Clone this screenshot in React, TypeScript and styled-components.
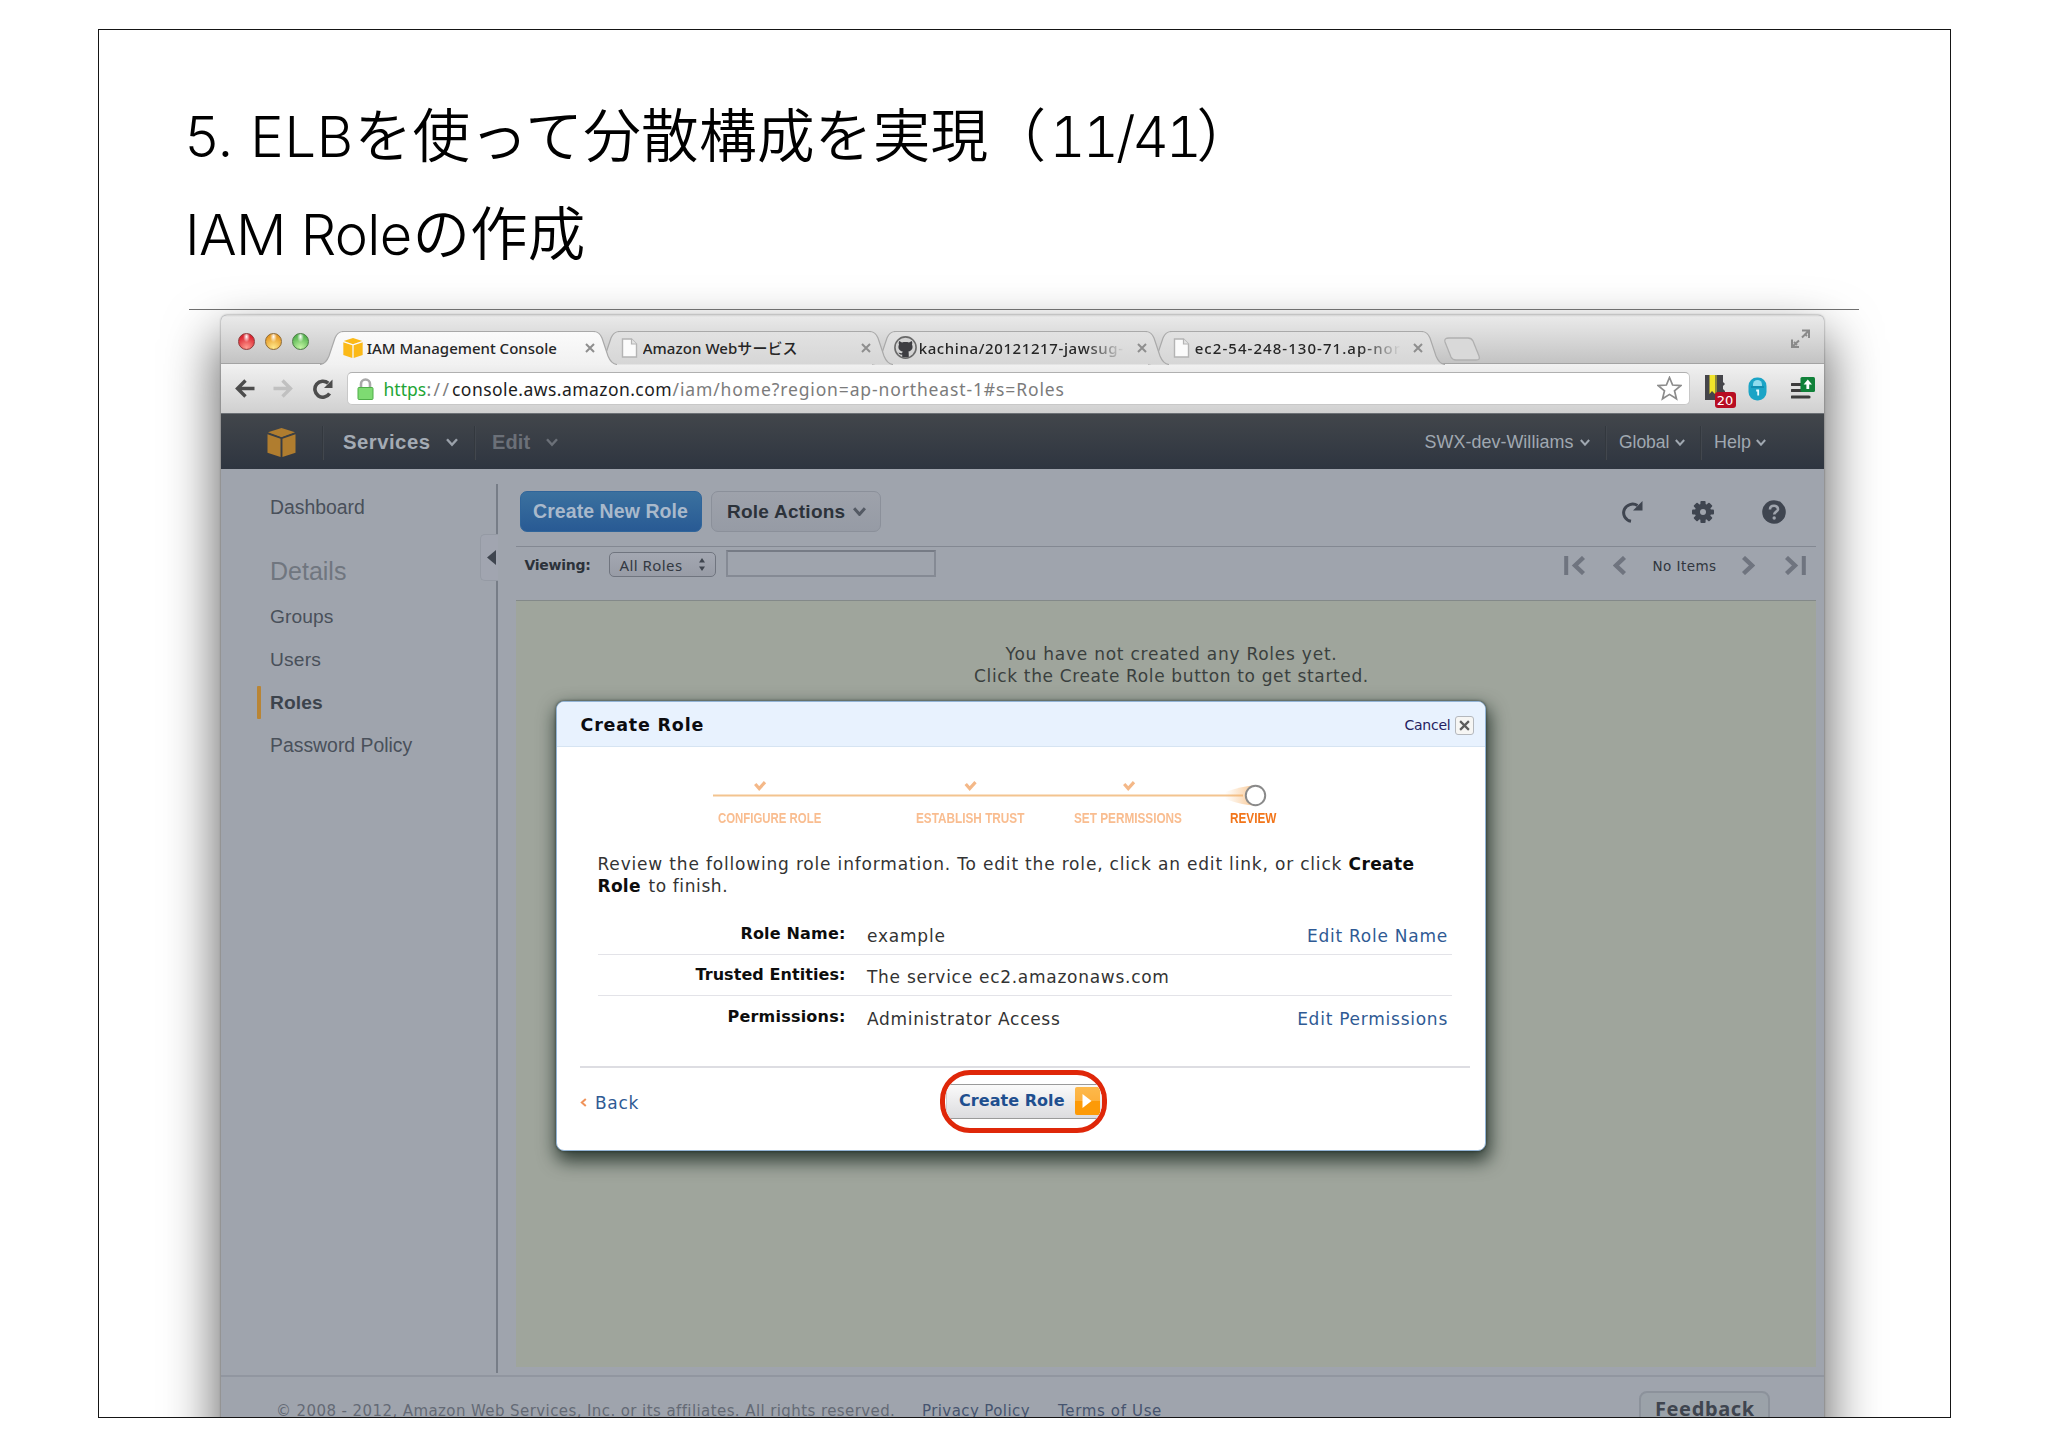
import React from "react";
import styled, { createGlobalStyle, css } from "styled-components";

const verdana = `"DejaVu Sans", sans-serif`;
const lucida = `"Noto Sans", "Noto Sans CJK JP", sans-serif`;
const helv = `"Liberation Sans", sans-serif`;
const jp = `"Noto Sans CJK JP", sans-serif`;
const light = `Inter, sans-serif`;

const Global = createGlobalStyle`
  * { box-sizing: border-box; }
  body { margin: 0; background: #fff; }
  svg { display: block; flex: none; }
`;

type TProps = { $f?: string; $s: number; $w?: number; $ls?: number; $b?: number; $c?: string; $ml?: number; $tab?: boolean };
const T = styled.span<TProps>`
  display: block;
  flex: none;
  white-space: pre;
  font-family: ${(p) => p.$f ?? verdana};
  font-size: ${(p) => p.$s}px;
  font-weight: ${(p) => p.$b ?? 400};
  letter-spacing: ${(p) => p.$ls ?? 0}px;
  color: ${(p) => p.$c ?? "#333"};
  width: ${(p) => (p.$w ? `${p.$w}px` : "auto")};
  margin-left: ${(p) => p.$ml ?? 0}px;
  ${(p) => p.$tab && css`font-variant-numeric: tabular-nums;`}
`;

const Page = styled.div`
  width: 2048px;
  height: 1447px;
  padding: 29px 0 0 98px;
  overflow: hidden;
`;
const Slide = styled.section`
  width: 1853px;
  height: 1389px;
  border: 1px solid #151515;
  overflow: hidden;
  background: #fff;
`;
const Titles = styled.header`
  height: 279px;
  padding: 53px 0 0 86px;
`;
const TitleLine = styled.div`
  height: 98px;
  display: flex;
  line-height: 98px;
  align-items: baseline;
`;
const Rule = styled.div`
  position: relative;
  z-index: 2;
  width: 1670px;
  height: 1px;
  margin: 0 0 5px 90px;
  background: #6f6f6f;
`;

const Window = styled.div`
  position: relative;
  width: 1603px;
  height: 1200px;
  margin-left: 122px;
  border-radius: 6px 6px 0 0;
  background: #9fa4ad;
  box-shadow: 0 0 2px rgba(0, 0, 0, 0.5), 0 26px 52px 4px rgba(0, 0, 0, 0.6);
`;
const TabStrip = styled.div`
  display: flex;
  height: 49px;
  border-radius: 6px 6px 0 0;
  border-bottom: 1px solid #a3a3a3;
  background: linear-gradient(#d2d2d2 0, #e9e9e9 2px, #dedede 16px, #c3c3c3 100%);
`;
const Lights = styled.div`
  display: flex;
  gap: 10.3px;
  padding: 17.5px 0 0 16.5px;
  width: 99px;
`;
const Light = styled.i<{ $a: string; $b: string; $c: string }>`
  width: 17px;
  height: 17px;
  border-radius: 50%;
  border: 1px solid ${(p) => p.$c};
  background: radial-gradient(ellipse at 50% 18%, #fff 0, transparent 32%),
    radial-gradient(circle at 50% 90%, ${(p) => p.$a} 0, ${(p) => p.$b} 75%);
`;
const Tab = styled.div<{ $z: number; $first?: boolean }>`
  position: relative;
  z-index: ${(p) => p.$z};
  display: flex;
  align-items: center;
  width: 297px;
  height: 34px;
  margin-top: 15.5px;
  margin-left: ${(p) => (p.$first ? 0 : -21)}px;
  padding-left: 22px;
  & > svg:first-child { position: absolute; left: 0; top: 0; z-index: -1; }
`;
const TabIcon = styled.div`
  display: flex;
  justify-content: center;
  width: 22px;
  margin-right: 2.7px;
`;
const TabTitle = styled.div<{ $fade?: boolean }>`
  width: 205px;
  margin-right: 13px;
  overflow: hidden;
  ${(p) => p.$fade && css`mask-image: linear-gradient(90deg, #000 165px, transparent 206px);`}
`;
const NewTab = styled.div`
  margin: 21.5px 0 0 -2px;
  height: 24px;
`;
const Expand = styled.div`
  margin: 14px 13px 0 auto;
`;

const Toolbar = styled.div`
  display: flex;
  align-items: center;
  height: 49px;
  padding-left: 14px;
  background: linear-gradient(#f1f1f1, #d0d0d0);
`;
const ToolIcon = styled.div<{ $ml: number }>`
  position: relative;
  margin-left: ${(p) => p.$ml}px;
`;
const Omnibox = styled.div`
  display: flex;
  align-items: center;
  width: 1343px;
  height: 33px;
  margin-left: 13px;
  padding: 0 7px 0 9px;
  border-radius: 5px;
  border: 1px solid #c8c8c8;
  border-top-color: #b0b0b0;
  background: #fff;
`;
const Star = styled.div`
  margin-left: auto;
`;
const Badge = styled.div`
  position: absolute;
  left: 9.5px;
  top: 17.5px;
  width: 21px;
  height: 16px;
  border-radius: 3px;
  background: #b80d22;
  display: flex;
  align-items: center;
  justify-content: center;
`;

const AwsBar = styled.nav`
  display: flex;
  align-items: center;
  height: 56px;
  padding: 2px 58px 0 46px;
  border-top: 1px solid #6c7075;
  background: linear-gradient(#42464b, #2e3540);
`;
const Account = styled.div`
  display: flex;
  align-items: center;
  margin-left: auto;
`;
const Gap = styled.div<{ $l: number }>`
  margin-left: ${(p) => p.$l}px;
`;
const Sep = styled.i<{ $l: number; $r: number }>`
  width: 2px;
  height: 34px;
  margin: 0 ${(p) => p.$r}px 0 ${(p) => p.$l}px;
  border-left: 1px solid #33383e;
  border-right: 1px solid #42474e;
`;

const Body = styled.div`
  display: flex;
  height: 908px;
  background: #9fa4ad;
  border-bottom: 2px solid #9196a0;
`;
const Sidebar = styled.aside`
  width: 259px;
  padding-top: 17px;
`;
const NavItem = styled.div<{ $h?: number; $pt?: number }>`
  display: flex;
  align-items: center;
  height: ${(p) => p.$h ?? 42.7}px;
  padding-top: ${(p) => p.$pt ?? 0}px;
  padding-left: 36px;
`;
const Marker = styled.i<{ $on?: boolean }>`
  width: 4px;
  height: 33px;
  margin-right: 9px;
  border-radius: 1px;
  background: ${(p) => (p.$on ? "#b98535" : "transparent")};
`;
const Divider = styled.div`
  display: flex;
  flex-direction: column;
  align-items: flex-end;
  width: 18px;
  padding-top: 15px;
`;
const VLine = styled.i<{ $h: number }>`
  width: 2px;
  height: ${(p) => p.$h}px;
  background: #777d87;
`;
const Handle = styled.div`
  display: flex;
  align-items: center;
  width: 18px;
  height: 47px;
  padding-left: 5.5px;
  border: 1px solid #959aa4;
  border-right: 0;
  border-radius: 5px 0 0 5px;
  background: #a1a5b0;
`;
const Main = styled.main`
  width: 1318px;
  padding-left: 18px;
`;
const Actions = styled.div`
  display: flex;
  align-items: center;
  height: 76.5px;
  padding-top: 9px;
  padding-left: 4px;
`;
const Button = styled.div<{ $w: number; $primary?: boolean; $pl: number }>`
  display: flex;
  align-items: center;
  width: ${(p) => p.$w}px;
  height: 41px;
  margin-right: 9.5px;
  padding-left: ${(p) => p.$pl}px;
  border-radius: 7px;
  border: 1px solid ${(p) => (p.$primary ? "#30659a" : "#8b909a")};
  background: ${(p) => (p.$primary ? "linear-gradient(#3b719f, #285a94)" : "linear-gradient(#9ea2ab, #969ba5)")};
`;
const Tools = styled.div`
  display: flex;
  align-items: center;
  gap: 48.3px;
  margin-left: auto;
  margin-right: 30px;
`;
const Filters = styled.div`
  display: flex;
  align-items: center;
  height: 54px;
  padding-left: 8.5px;
  padding-bottom: 17px;
  border-top: 1px solid #838892;
`;
const Select = styled.div`
  display: flex;
  align-items: center;
  width: 106.5px;
  height: 25px;
  margin: 0 10.5px 0 18.5px;
  padding-left: 9.5px;
  border: 1.5px solid #70757f;
  border-radius: 5px;
  background: linear-gradient(#a3a7b1, #989ca6);
`;
const Input = styled.div`
  width: 209.5px;
  height: 26.5px;
  margin-bottom: 2px;
  border: 2px solid #858a94;
  border-top-color: #767b85;
`;
const Pager = styled.div`
  display: flex;
  align-items: center;
  margin-left: auto;
  margin-right: 10.5px;
  padding-top: 2px;
`;
const Panel = styled.div`
  display: flex;
  flex-direction: column;
  align-items: center;
  height: 767px;
  padding: 42px 0 0 11px;
  border-top: 1px solid #838989;
  background: #9fa59c;
`;
const PanelLine = styled.div`
  height: 22px;
  display: flex;
  align-items: center;
`;
const Footer = styled.footer`
  display: flex;
  padding: 14px 0 0 55px;
`;
const FootText = styled.div`
  display: flex;
  padding-top: 11px;
`;
const Feedback = styled.div`
  margin-left: auto;
  margin-right: 54px;
  width: 131px;
  height: 60px;
  padding: 2px 0 0 14px;
  border: 2px solid #8c929b;
  border-radius: 8px;
  background: #9ba2a9;
`;

const Modal = styled.div`
  position: absolute;
  left: 334.5px;
  top: 386px;
  width: 930.5px;
  height: 449.5px;
  border: 1px solid #93b4d6;
  border-radius: 8px;
  background: #fff;
  box-shadow: 2px 8px 18px 2px rgba(10, 25, 18, 0.75), 0 0 3px rgba(20, 40, 40, 0.7);
`;
const ModalHead = styled.div`
  display: flex;
  align-items: center;
  height: 45px;
  padding: 2px 11px 0 24px;
  border-radius: 7px 7px 0 0;
  border-bottom: 1px solid #d6e4f2;
  background: #e8f2fe;
`;
const Cancel = styled.div`
  display: flex;
  align-items: center;
  margin-left: auto;
`;
const CloseBox = styled.div`
  display: flex;
  align-items: center;
  justify-content: center;
  width: 19px;
  height: 19px;
  margin-left: 4.5px;
  border: 1px solid #b4b8bd;
  border-radius: 3px;
  background: #f6f6f4;
`;
const Wizard = styled.div`
  margin: 31.5px 0 0 156.5px;
`;
const Steps = styled.div`
  display: flex;
  align-items: center;
  height: 19px;
  padding-left: 5px;
`;
const Step = styled.div<{ $w: number; $gap: number; $on?: boolean; $k?: number }>`
  width: ${(p) => p.$w}px;
  margin-right: ${(p) => p.$gap}px;
  white-space: pre;
  font: 700 15px/19px ${helv};
  color: ${(p) => (p.$on ? "#f2751a" : "#f9bd90")};
  & > span { display: inline-block; transform: scaleX(${(p) => p.$k ?? 0.785}); transform-origin: 0 50%; }
`;
const Intro = styled.div`
  display: flex;
  flex-direction: column;
  padding: 27px 0 0 41px;
`;
const Line = styled.div`
  display: flex;
  align-items: center;
  height: 21.4px;
`;
const Rows = styled.div`
  width: 854px;
  margin: 17.5px 0 0 41px;
`;
const Row = styled.div`
  display: flex;
  align-items: center;
  height: 41.2px;
  padding-top: 4.6px;
  border-bottom: 1px solid #e3e3e8;
  &:last-child { border-bottom-color: transparent; }
`;
const Label = styled.div`
  display: flex;
  justify-content: flex-end;
  width: 248px;
  margin-right: 21.5px;
  padding-bottom: 5px;
`;
const EditLink = styled.div`
  margin-left: auto;
  padding-right: 3.5px;
`;
const ModalFoot = styled.div`
  display: flex;
  width: 890px;
  margin: 28.5px 0 0 23.5px;
  padding-top: 2px;
  border-top: 2px solid #dddde2;
`;
const Back = styled.div`
  display: flex;
  align-items: center;
  gap: 8px;
  width: 359.5px;
  height: 63px;
  padding-top: 3px;
`;
const Highlight = styled.div`
  display: flex;
  align-items: center;
  width: 167px;
  height: 63px;
  padding-left: 1px;
  border: 5px solid #df2709;
  border-radius: 30px;
  overflow: hidden;
`;
const Go = styled.div`
  display: flex;
  flex: none;
  align-items: center;
  width: 165px;
  height: 35px;
  padding-left: 12.5px;
  border: 1px solid #9a9a9a;
  border-left-color: #d0d0d0;
  border-radius: 5px;
  background: linear-gradient(#fafafa, #dcdcdf);
  & > span { padding-bottom: 2px; }
`;
const GoArrow = styled.div`
  display: flex;
  align-items: center;
  justify-content: center;
  width: 25px;
  height: 28px;
  margin-left: 9.5px;
  border-radius: 2px;
  background: linear-gradient(#fdb94b 0, #fdb03c 50%, #fd9a07 50%);
`;

const tabPath = "M0 33.5 C5 33 7 30 9 25 L15 7 C17 2.5 19 .5 24 .5 H273 C278 .5 280 2.5 282 7 L288 25 C290 30 292 33 297 33.5";
const TabShape = ({ active }: { active?: boolean }) => (
  <svg width="297" height="34" viewBox="0 0 297 34">
    <defs>
      <linearGradient id={active ? "ta" : "ti"} x1="0" y1="0" x2="0" y2="1">
        <stop offset="0" stopColor={active ? "#fbfbfb" : "#e2e2e2"} />
        <stop offset="1" stopColor={active ? "#f1f1f1" : "#d6d6d6"} />
      </linearGradient>
    </defs>
    <path d={tabPath + (active ? " V34 H0 Z" : "")} fill={`url(#${active ? "ta" : "ti"})`} />
    <path d={tabPath} fill="none" stroke="#a9a9a9" strokeWidth="1.2" />
  </svg>
);
const Cube = ({ s, c, d }: { s: number; c: string; d: string }) => (
  <svg width={s} height={s} viewBox="0 0 30 30">
    <path d="M15 0 29 4.5 15 9.5 1 4.5Z" fill={c} />
    <path d="M.5 6.5 14 11V30L.5 25.5Z" fill={c} />
    <path d="M29.5 6.5 16 11V30L29.5 25.5Z" fill={c} />
    <path d="M1 5.5 15 10.2 29 5.5" stroke={d} strokeWidth="1" fill="none" opacity=".7" />
  </svg>
);
const FileIcon = () => (
  <svg width="17" height="20" viewBox="0 0 17 20">
    <path d="M1.5 1H10.5L15.5 6V19H1.5Z" fill="#fbfbfb" stroke="#b4b4b4" strokeWidth="1.4" />
    <path d="M10.5 1V6H15.5" fill="#e4e4e4" stroke="#b4b4b4" strokeWidth="1.2" />
  </svg>
);
const OctoIcon = () => (
  <svg width="23" height="23" viewBox="0 0 23 23">
    <circle cx="11.5" cy="11.5" r="10.6" fill="#d4d4d4" stroke="#6a6a6a" strokeWidth="1.6" />
    <path d="M5.2 5 8 6.4C10 5.8 13 5.8 15 6.4L17.8 5C18.4 6.4 18.4 7.6 18 8.6 19.4 11.6 18.2 15 14.4 15.6 14.8 16.5 14.8 18 14.8 21H8.2V18.6C6 19 5.4 17.8 4.4 16.8 6 16.4 6.6 17.6 8.2 17 8.2 16.4 8.4 16 8.7 15.6 4.8 15 3.6 11.6 5 8.6 4.6 7.6 4.6 6.4 5.2 5Z" fill="#3e3e42" />
  </svg>
);
const X = ({ s = 10, c = "#8e8e8e", w = 2 }) => (
  <svg width={s} height={s} viewBox="0 0 10 10">
    <path d="M1 1 9 9M9 1 1 9" stroke={c} strokeWidth={w} />
  </svg>
);
const Chev = ({ w = 12, c, sw = 2.4 }: { w?: number; c: string; sw?: number }) => (
  <svg width={w} height={w * 0.7} viewBox="0 0 12 8.4">
    <path d="M1 1.2 6 6.8 11 1.2" fill="none" stroke={c} strokeWidth={sw} />
  </svg>
);
const Arrow = ({ c, flip }: { c: string; flip?: boolean }) => (
  <svg width="20" height="19" viewBox="0 0 20 19">
    <g transform={flip ? "translate(20 0) scale(-1 1)" : undefined}>
      <path d="M10.5 1.5 2.5 9.5 10.5 17.5M3 9.5H19.5" fill="none" stroke={c} strokeWidth="3.4" />
    </g>
  </svg>
);
const PageArrow = ({ bar, flip }: { bar?: boolean; flip?: boolean }) => (
  <svg width={bar ? 21 : 13} height="19" viewBox={bar ? "0 0 21 19" : "0 0 13 19"}>
    <g transform={flip ? `translate(${bar ? 21 : 13} 0) scale(-1 1)` : undefined}>
      {bar && <path d="M2.2 0V19" stroke="#6f747f" strokeWidth="4" />}
      <path d={bar ? "M19.5 1.5 11 9.5 19.5 17.5" : "M11.5 1.5 3 9.5 11.5 17.5"} fill="none" stroke="#6f747f" strokeWidth="4.4" />
    </g>
  </svg>
);
const Track = () => (
  <svg width="560" height="29" viewBox="0 0 560 29">
    <defs>
      <linearGradient id="glow">
        <stop offset="0" stopColor="#f6b46a" stopOpacity="0" />
        <stop offset="1" stopColor="#f6a95a" stopOpacity=".7" />
      </linearGradient>
    </defs>
    <path d="M0 16.5H530" stroke="#f3c48f" strokeWidth="1.8" />
    {[47, 257.5, 416].map((x) => (
      <path key={x} d={`M${x - 4.8} 5 L${x - 0.8} 9.5 L${x + 5} 3.2`} fill="none" stroke="#f4b888" strokeWidth="3.2" />
    ))}
    <path d="M512 13 Q532 6 543 6.5V26.5Q532 27 512 20Z" fill="url(#glow)" />
    <circle cx="542.5" cy="16.5" r="9.7" fill="#fff" stroke="#8a8a8a" strokeWidth="2" />
  </svg>
);

const TAB = "#262626";
const NAV = "#49505a";
const LINK = "#2f5a94";
const URLGREY = "#7b7b7b";
const ACC = "#a0a8b1";

export default function App() {
  return (
    <>
      <Global />
      <Page>
        <Slide>
          <Titles>
            <TitleLine>
              <T $f={light} $b={300} $s={56} $w={169.5} $ls={0.7} $c="#000">5. ELB</T>
              <T $f={jp} $b={350} $s={57.6} $w={695} $ls={0.3} $c="#000">を使って分散構成を実現（</T>
              <T $f={light} $b={300} $s={56} $w={147} $ls={-3} $tab $c="#000">11/41</T>
              <T $f={jp} $b={350} $s={57.6} $w={58} $c="#000">）</T>
            </TitleLine>
            <TitleLine>
              <T $f={light} $b={300} $s={56} $w={227.5} $ls={-0.7} $c="#000">IAM Role</T>
              <T $f={jp} $b={350} $s={57.6} $w={173} $c="#000">の作成</T>
            </TitleLine>
          </Titles>
          <Rule />
          <Window>
            <TabStrip>
              <Lights>
                <Light $a="#ff9a8e" $b="#dc2430" $c="#8e3a3a" />
                <Light $a="#ffe88a" $b="#e69a26" $c="#8e6a35" />
                <Light $a="#c4f5a4" $b="#56b450" $c="#4c7a45" />
              </Lights>
              <Tab $z={5} $first>
                <TabShape active />
                <TabIcon><Cube s={20} c="#fbb917" d="#fff" /></TabIcon>
                <TabTitle><T $f={lucida} $s={15} $c={TAB} $b={500}>IAM Management Console</T></TabTitle>
                <X />
              </Tab>
              <Tab $z={4}>
                <TabShape />
                <TabIcon><FileIcon /></TabIcon>
                <TabTitle><T $f={lucida} $s={15} $ls={0.07} $c={TAB} $b={500}>Amazon Webサービス</T></TabTitle>
                <X />
              </Tab>
              <Tab $z={3}>
                <TabShape />
                <TabIcon><OctoIcon /></TabIcon>
                <TabTitle $fade><T $f={lucida} $s={15} $ls={0.6} $c={TAB} $b={500}>kachina/20121217-jawsug-</T></TabTitle>
                <X />
              </Tab>
              <Tab $z={2}>
                <TabShape />
                <TabIcon><FileIcon /></TabIcon>
                <TabTitle $fade><T $f={lucida} $s={15} $ls={1.05} $c={TAB} $b={500}>ec2-54-248-130-71.ap-nor</T></TabTitle>
                <X />
              </Tab>
              <NewTab>
                <svg width="38" height="24" viewBox="0 0 38 24"><path d="M6 1H25C28 1 29 2 30 4L36 19C37 22 36 23 33 23H13C10 23 9 22 8 20L2 5C1 2 3 1 6 1Z" fill="#d9d9d9" stroke="#b0b0b0" strokeWidth="1.3" /></svg>
              </NewTab>
              <Expand>
                <svg width="21" height="20" viewBox="0 0 21 20" fill="none" stroke="#8a8a8a" strokeWidth="2">
                  <path d="M12 1.5H19V9M18.5 2 12 8.5M14.5 4.5 17 7" />
                  <path d="M2 10.5V18H9M2.5 17.5 9 11.5M4 13 7 16" />
                </svg>
              </Expand>
            </TabStrip>
            <Toolbar>
              <Arrow c="#4c4c4c" />
              <ToolIcon $ml={18}><Arrow c="#c0c0c0" flip /></ToolIcon>
              <ToolIcon $ml={18.5}>
                <svg width="22" height="20" viewBox="0 0 22 20">
                  <path d="M17.6 14.6A8 8 0 1 1 16.2 4.2" fill="none" stroke="#4c4c4c" strokeWidth="3.6" />
                  <path d="M20.5 .5V9H12Z" fill="#4c4c4c" />
                </svg>
              </ToolIcon>
              <Omnibox>
                <svg width="17" height="22" viewBox="0 0 17 22">
                  <path d="M4 11V6A4.5 4.5 0 0 1 13 6V11" fill="none" stroke="#a9a9a9" strokeWidth="2.6" />
                  <rect x="1" y="9.5" width="15" height="12" rx="1" fill="#7edb72" stroke="#4fae48" />
                </svg>
                <T $f={lucida} $s={17.5} $w={43} $ml={10} $c="#22a535">https</T>
                <T $f={lucida} $s={17.5} $w={25.5} $ls={2.4} $c={URLGREY}>://</T>
                <T $f={lucida} $s={17.5} $w={220.5} $ls={0.45} $c="#1c1c1c">console.aws.amazon.com</T>
                <T $f={lucida} $s={17.5} $w={392} $ls={0.87} $c={URLGREY}>/iam/home?region=ap-northeast-1#s=Roles</T>
                <Star>
                  <svg width="25" height="25" viewBox="0 0 25 25"><path d="M12.5 1.5 15.6 9 23.8 9.6 17.5 14.8 19.5 22.8 12.5 18.4 5.5 22.8 7.5 14.8 1.2 9.6 9.4 9Z" fill="#fff" stroke="#8c8c8c" strokeWidth="1.7" /></svg>
                </Star>
              </Omnibox>
              <ToolIcon $ml={15.5}>
                <svg width="21" height="28" viewBox="0 0 21 28">
                  <path d="M0 0H18V7L20 9 18 11V14L20 16V25H0Z" fill="#45454a" />
                  <path d="M4.5 0H10V19L7 16 4.5 19Z" fill="#f0e32a" />
                  <path d="M10 0H12V19H10Z" fill="#8d8a3a" />
                </svg>
                <Badge><T $s={13} $c="#fff">20</T></Badge>
              </ToolIcon>
              <ToolIcon $ml={22}>
                <svg width="19" height="24" viewBox="0 0 19 24">
                  <rect x=".5" y=".5" width="18" height="23" rx="8.5" fill="#1ba4c6" />
                  <path d="M5 9V7.5A4.5 4.5 0 0 1 14 7.5V9Z" fill="#8fdcee" />
                  <path d="M3 10H16" stroke="#0f86a8" strokeWidth="1.4" />
                  <path d="M8.2 13.5H10.2V18.5" fill="none" stroke="#e8fbff" strokeWidth="1.8" />
                </svg>
              </ToolIcon>
              <ToolIcon $ml={23.5}>
                <svg width="25" height="26" viewBox="0 0 25 26">
                  <path d="M1 8.5H14M1 14.5H18M1 21H18" stroke="#3d3d3d" strokeWidth="3.2" strokeLinecap="round" />
                  <rect x="9.5" y="1" width="14.5" height="15" rx="1.5" fill="#108139" />
                  <path d="M16.8 3.5 21 8.5H18.2V13H15.4V8.5H12.6Z" fill="#fff" />
                </svg>
              </ToolIcon>
            </Toolbar>
            <AwsBar>
              <Cube s={29} c="#b07d2f" d="#3b4046" />
              <Sep $l={26} $r={19} />
              <T $f={helv} $b={700} $s={20.3} $w={88} $ls={0.5} $c="#a4abb4">Services</T>
              <Gap $l={15}><Chev c="#9aa1aa" /></Gap>
              <Sep $l={16} $r={16} />
              <T $f={helv} $b={700} $s={20} $w={38} $ls={0.1} $c="#6b7078">Edit</T>
              <Gap $l={16}><Chev c="#6b7078" /></Gap>
              <Account>
                <T $f={helv} $s={17.9} $w={149} $ls={0.05} $c={ACC}>SWX-dev-Williams</T>
                <Gap $l={6.5}><Chev w={10} c={ACC} /></Gap>
                <Sep $l={15} $r={12} />
                <T $f={helv} $s={17.5} $w={50} $ls={-0.05} $c={ACC}>Global</T>
                <Gap $l={6}><Chev w={10} c={ACC} /></Gap>
                <Sep $l={15} $r={12} />
                <T $f={helv} $s={17.9} $w={37} $ls={0.05} $c={ACC}>Help</T>
                <Gap $l={5}><Chev w={10} c={ACC} /></Gap>
              </Account>
            </AwsBar>
            <Body>
              <Sidebar>
                <NavItem $h={43}><Marker /><T $f={helv} $s={19.4} $c={NAV}>Dashboard</T></NavItem>
                <NavItem $h={67} $pt={18}><Marker /><T $f={helv} $s={25} $c="#70767f">Details</T></NavItem>
                <NavItem><Marker /><T $f={helv} $s={19.2} $ls={0.1} $c={NAV}>Groups</T></NavItem>
                <NavItem><Marker /><T $f={helv} $s={19.2} $ls={0.2} $c={NAV}>Users</T></NavItem>
                <NavItem><Marker $on /><T $f={helv} $s={19.2} $ls={0.1} $b={700} $c="#3c434c">Roles</T></NavItem>
                <NavItem><Marker /><T $f={helv} $s={19.4} $c={NAV}>Password Policy</T></NavItem>
              </Sidebar>
              <Divider>
                <VLine $h={50} />
                <Handle>
                  <svg width="9" height="15" viewBox="0 0 9 15"><path d="M9 0V15L0 7.5Z" fill="#3f454f" /></svg>
                </Handle>
                <VLine $h={792} />
              </Divider>
              <Main>
                <Actions>
                  <Button $primary $w={181.5} $pl={12}><T $f={helv} $s={19.5} $b={700} $ls={0.07} $c="#a9b9cb">Create New Role</T></Button>
                  <Button $w={170} $pl={15}>
                    <T $f={helv} $s={19} $b={700} $ls={0.25} $c="#2c323a">Role Actions</T>
                    <Gap $l={8}><Chev w={13} c="#545a64" sw={2.8} /></Gap>
                  </Button>
                  <Tools>
                    <svg width="23" height="22" viewBox="0 0 23 22">
                      <path d="M11 20.2A9 8.6 0 1 1 17.5 4.5" fill="none" stroke="#3f4550" strokeWidth="3" />
                      <path d="M22.5 0V9.5H13Z" fill="#3f4550" />
                    </svg>
                    <svg width="22" height="22" viewBox="0 0 22 22">
                      <g fill="#3f4550">
                        {[0, 45, 90, 135].map((a) => (
                          <rect key={a} x="8.4" y="0" width="5.2" height="22" rx="1" transform={`rotate(${a} 11 11)`} />
                        ))}
                        <circle cx="11" cy="11" r="8.2" />
                      </g>
                      <circle cx="11" cy="11" r="3" fill="#9fa4ad" />
                    </svg>
                    <svg width="24" height="24" viewBox="0 0 24 24">
                      <circle cx="12" cy="12" r="11.8" fill="#3f4550" />
                      <path d="M8 9.4C8 4.6 16 4.6 16 9.2 16 11.8 12.2 11.6 12.2 14.6" fill="none" stroke="#9fa4ad" strokeWidth="2.6" />
                      <circle cx="12.2" cy="18" r="1.7" fill="#9fa4ad" />
                    </svg>
                  </Tools>
                </Actions>
                <Filters>
                  <T $s={14} $b={700} $w={66} $ls={-0.28} $c="#2c323a">Viewing:</T>
                  <Select>
                    <T $f={lucida} $s={15} $w={78.5} $ls={0.43} $c="#333942">All Roles</T>
                    <svg width="8" height="13" viewBox="0 0 8 13"><path d="M4 0 7 4.5H1ZM4 13 1 8.5H7Z" fill="#3f454f" /></svg>
                  </Select>
                  <Input />
                  <Pager>
                    <PageArrow bar />
                    <Gap $l={28.5}><PageArrow /></Gap>
                    <T $s={13.5} $w={64} $ls={0.45} $ml={26.5} $c="#30363e">No Items</T>
                    <Gap $l={25.5}><PageArrow flip /></Gap>
                    <Gap $l={29.5}><PageArrow bar flip /></Gap>
                  </Pager>
                </Filters>
                <Panel>
                  <PanelLine><T $s={17} $ls={0.76} $c="#3a403e">You have not created any Roles yet.</T></PanelLine>
                  <PanelLine><T $s={17} $ls={0.64} $c="#3a403e">Click the Create Role button to get started.</T></PanelLine>
                </Panel>
              </Main>
            </Body>
            <Footer>
              <FootText>
                <T $s={15} $w={619} $ls={0.41} $c="#646a75">© 2008 - 2012, Amazon Web Services, Inc. or its affiliates. All rights reserved.</T>
                <T $s={15} $w={108} $ls={0.41} $ml={27} $c="#46546f">Privacy Policy</T>
                <T $s={15} $w={104} $ls={0.65} $ml={28} $c="#46546f">Terms of Use</T>
              </FootText>
              <Feedback><T $s={20} $f={lucida} $b={700} $ls={0.6} $c="#3f454f">Feedback</T></Feedback>
            </Footer>

            <Modal>
              <ModalHead>
                <T $s={17.5} $b={700} $ls={0.8} $c="#0c0c10">Create Role</T>
                <Cancel>
                  <T $s={14} $w={46} $ls={-0.24} $c="#25215f">Cancel</T>
                  <CloseBox><X s={11} c="#5d5d5d" w={2} /></CloseBox>
                </Cancel>
              </ModalHead>
              <Wizard>
                <Track />
                <Steps>
                  <Step $w={104} $gap={94} $k={0.76}><span>CONFIGURE ROLE</span></Step>
                  <Step $w={109} $gap={48.7}><span>ESTABLISH TRUST</span></Step>
                  <Step $w={109} $gap={47.5}><span>SET PERMISSIONS</span></Step>
                  <Step $w={47} $gap={0} $on><span>REVIEW</span></Step>
                </Steps>
              </Wizard>
              <Intro>
                <Line>
                  <T $s={17} $w={751} $ls={0.82}>Review the following role information. To edit the role, click an edit link, or click </T>
                  <T $s={17} $b={700} $ls={0.4} $c="#0d0d0d">Create</T>
                </Line>
                <Line>
                  <T $s={17} $b={700} $w={51} $ls={0.3} $c="#0d0d0d">Role</T>
                  <T $s={17} $ls={0.6}>to finish.</T>
                </Line>
              </Intro>
              <Rows>
                <Row>
                  <Label><T $s={16} $b={700} $ls={0.17} $c="#0d0d0d">Role Name:</T></Label>
                  <T $s={17} $ls={0.78}>example</T>
                  <EditLink><T $s={17} $ls={0.75} $c={LINK}>Edit Role Name</T></EditLink>
                </Row>
                <Row>
                  <Label><T $s={16} $b={700} $ls={0.07} $c="#0d0d0d">Trusted Entities:</T></Label>
                  <T $s={17} $ls={0.72}>The service ec2.amazonaws.com</T>
                </Row>
                <Row>
                  <Label><T $s={16} $b={700} $ls={0.21} $c="#0d0d0d">Permissions:</T></Label>
                  <T $s={17} $ls={0.7}>Administrator Access</T>
                  <EditLink><T $s={17} $ls={0.75} $c={LINK}>Edit Permissions</T></EditLink>
                </Row>
              </Rows>
              <ModalFoot>
                <Back>
                  <svg width="7" height="9" viewBox="0 0 7 9"><path d="M5.8 1 1.8 4.5 5.8 8" fill="none" stroke="#f0935a" strokeWidth="2" /></svg>
                  <T $s={17} $ls={0.65} $c={LINK}>Back</T>
                </Back>
                <Highlight>
                  <Go>
                    <T $s={16} $b={700} $w={106} $ls={0.05} $c="#1f4f8f">Create Role</T>
                    <GoArrow><svg width="10" height="14" viewBox="0 0 10 14"><path d="M.5 0 9.5 7 .5 14Z" fill="#fff" /></svg></GoArrow>
                  </Go>
                </Highlight>
              </ModalFoot>
            </Modal>
          </Window>
        </Slide>
      </Page>
    </>
  );
}
